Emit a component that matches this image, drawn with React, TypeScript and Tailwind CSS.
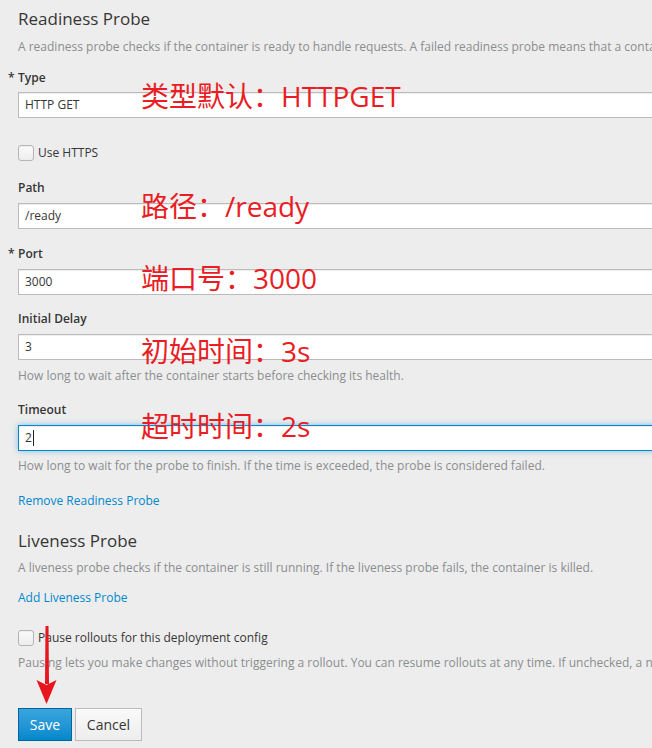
import React from "react";

const inputBase =
  "block h-[26px] w-[720px] border border-[#bbbbbb] bg-white pl-[6px] text-[12px] leading-[24px] text-[#363636] shadow-[inset_0_1px_1px_rgba(3,3,3,0.075)]";

function Label({ text, required }: { text: string; required?: boolean }) {
  return (
    <div className="h-[20px] text-[12px] font-semibold leading-[20px] text-[#363636]">
      {required && <span className="-ml-[10px] inline-block w-[10px]">*</span>}
      {text}
    </div>
  );
}

function Checkbox() {
  return (
    <span className="inline-block h-[16px] w-[16px] rounded-[3px] border border-[#b5b5b5] bg-gradient-to-b from-[#fafafa] to-[#ededed] shadow-[inset_0_1px_1px_rgba(0,0,0,0.05)]" />
  );
}

const noteFont = { fontFamily: '"Open Sans", "Noto Sans CJK SC", sans-serif' };

export default function App() {
  const note =
    "absolute left-[141px] whitespace-nowrap text-[28px] leading-[32px] text-[#ea1c24]";
  return (
    <div
      className="relative h-[748px] w-[652px] overflow-hidden bg-[#ededed] pl-[18px] text-[#363636]"
      style={{ fontFamily: '"Open Sans", "Noto Sans", sans-serif' }}
    >
      <div className="pt-[9px] h-[29px] text-[17px] leading-[20px] text-[#363636]">
        Readiness Probe
      </div>
      <div className="mt-[8px] h-[20px] w-[634px] overflow-hidden whitespace-nowrap text-[12px] leading-[20px] text-[#8b8d8f]">
        A readiness probe checks if the container is ready to handle requests. A failed readiness probe means that a container should not receive any traffic from a proxy, even if it's running.
      </div>

      <div className="mt-[11px]">
        <Label text="Type" required />
      </div>
      <div className={`mt-[4px] ${inputBase}`}>HTTP GET</div>

      <div className="mt-[25px] flex h-[20px] items-center gap-[4px] text-[12px] leading-[20px]">
        <Checkbox />
        <span>Use HTTPS</span>
      </div>

      <div className="mt-[15px]">
        <Label text="Path" />
      </div>
      <div className={`mt-[5px] ${inputBase}`}>/ready</div>

      <div className="mt-[15px]">
        <Label text="Port" required />
      </div>
      <div className={`mt-[5px] ${inputBase}`}>3000</div>

      <div className="mt-[14px]">
        <Label text="Initial Delay" />
      </div>
      <div className={`mt-[5px] ${inputBase}`}>3</div>
      <div className="mt-[6px] h-[20px] whitespace-nowrap text-[12px] leading-[20px] text-[#8b8d8f]">
        How long to wait after the container starts before checking its health.
      </div>

      <div className="mt-[14px]">
        <Label text="Timeout" />
      </div>
      <div className="mt-[5px] flex h-[26px] w-[720px] items-center border border-[#0088ce] bg-white pl-[6px] text-[12px] text-[#363636] shadow-[inset_0_1px_1px_rgba(3,3,3,0.075),0_0_6px_rgba(0,136,206,0.45)]">
        <span>2</span>
        <span className="ml-[1px] inline-block h-[16px] w-px bg-[#222]" />
      </div>
      <div className="mt-[5px] h-[20px] whitespace-nowrap text-[12px] leading-[20px] text-[#8b8d8f]">
        How long to wait for the probe to finish. If the time is exceeded, the probe is considered failed.
      </div>

      <div className="mt-[15px] h-[20px] text-[12px] leading-[20px] text-[#0088ce]">
        Remove Readiness Probe
      </div>

      <div className="mt-[20px] h-[20px] text-[17px] leading-[20px] text-[#363636]">
        Liveness Probe
      </div>
      <div className="mt-[7px] h-[20px] whitespace-nowrap text-[12px] leading-[20px] text-[#8b8d8f]">
        A liveness probe checks if the container is still running. If the liveness probe fails, the container is killed.
      </div>
      <div className="mt-[10px] h-[20px] text-[12px] leading-[20px] text-[#0088ce]">
        Add Liveness Probe
      </div>

      <div className="mt-[20px] flex h-[20px] items-center gap-[4px] text-[12px] leading-[20px]">
        <Checkbox />
        <span>Pause rollouts for this deployment config</span>
      </div>
      <div className="mt-[5px] h-[20px] w-[634px] overflow-hidden whitespace-nowrap text-[12px] leading-[20px] text-[#8b8d8f]">
        Pausing lets you make changes without triggering a rollout. You can resume rollouts at any time. If unchecked, a new rollout will start on each save.
      </div>

      <div className="mt-[35px] flex gap-[3px]">
        <button className="h-[33px] w-[54px] border border-[#00659c] bg-gradient-to-b from-[#39a5dc] to-[#0088ce] text-[14px] text-white">
          Save
        </button>
        <button className="h-[33px] w-[67px] border border-[#bbbbbb] bg-gradient-to-b from-[#fafafa] to-[#ededed] text-[14px] text-[#363636]">
          Cancel
        </button>
      </div>

      <div className={note} style={{ top: 80, ...noteFont }}>
        类型默认：HTTPGET
      </div>
      <div className={note} style={{ top: 190, ...noteFont }}>
        路径：/ready
      </div>
      <div className={note} style={{ top: 262, ...noteFont }}>
        端口号：3000
      </div>
      <div className={note} style={{ top: 335, ...noteFont }}>
        初始时间：3s
      </div>
      <div className={note} style={{ top: 410, ...noteFont }}>
        超时时间：2s
      </div>

      <svg className="absolute left-[34px] top-[624px]" width="26" height="82" viewBox="0 0 26 82">
        <path d="M11.5 2 L14.5 2 L15 60 L11 60 Z" fill="#e8141e" />
        <path d="M2.5 56 L12.5 80 L22.5 56 L12.5 61 Z" fill="#e8141e" />
      </svg>
    </div>
  );
}
